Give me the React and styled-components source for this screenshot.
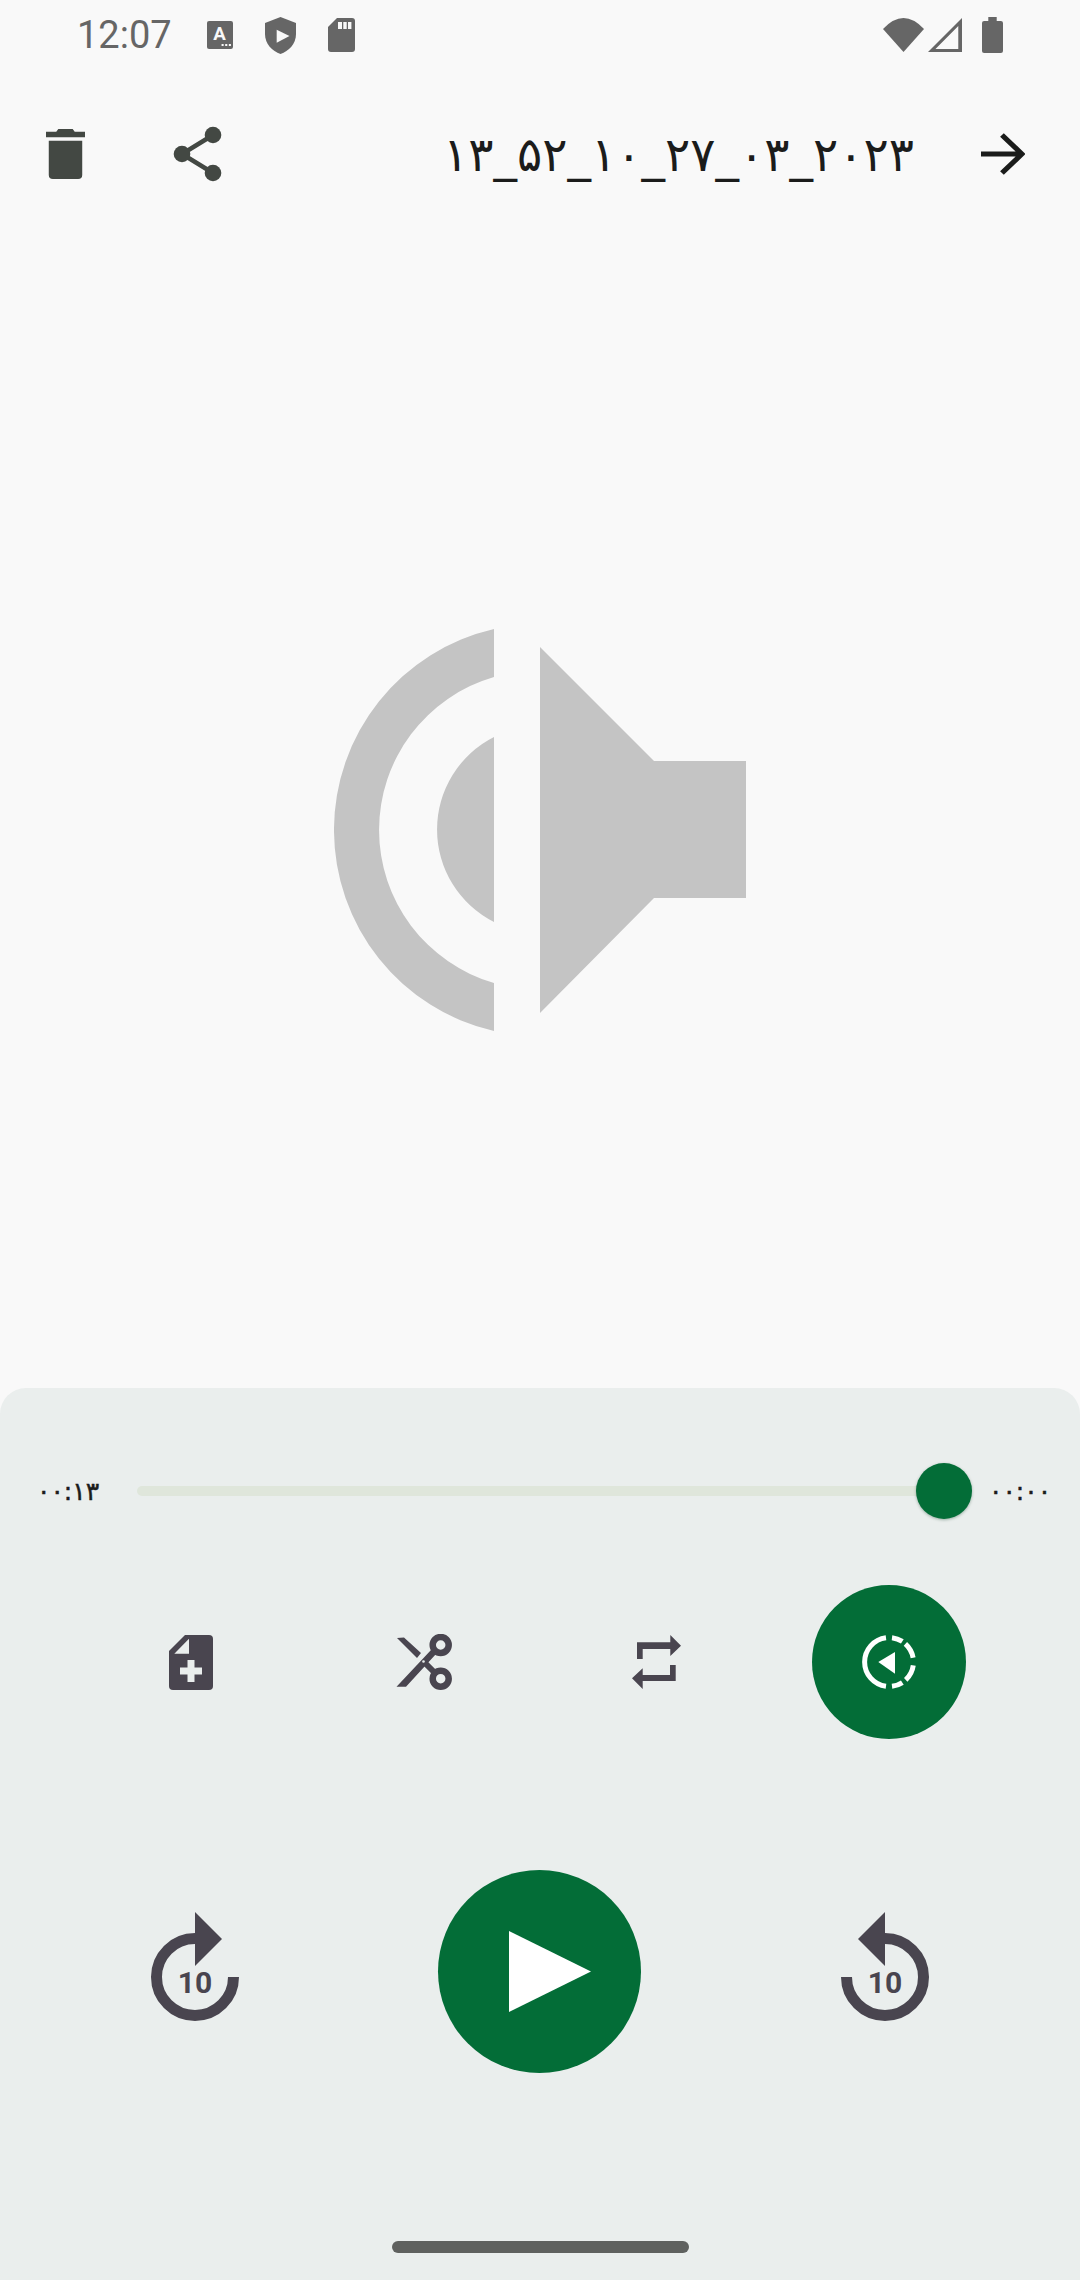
import React from 'react';
import styled, { createGlobalStyle } from 'styled-components';

const GREEN = '#036d37';
const PANEL = '#eaeeed';
const PAGE = '#f9f9f9';
const INK = '#49454f';
const TOP_INK = '#434843';
const STATUS = '#666666';

// right half of the "play from" ring, degrees clockwise from the top
const ringDashes = [[7, 33], [42, 80], [98, 137], [147, 173]];

const polar = deg => {
  const rad = (deg * Math.PI) / 180;
  return `${(30 + 24.5 * Math.sin(rad)).toFixed(2)} ${(30 - 24.5 * Math.cos(rad)).toFixed(2)}`;
};

export default () => (
  <Screen>
    <GlobalStyle />
    <StatusBar>
      <Clock>12:07</Clock>
      <StatusIcons>
        <Icon width="26" height="28" viewBox="0 0 25 28">
          <rect width="25" height="28" rx="2" fill={STATUS} />
          <KeyLetter x="12" y="19">A</KeyLetter>
          <path d="M14 23h2v2h-2zM17.5 23h2v2h-2zM21 23h2v2h-2z" fill={PAGE} />
        </Icon>
        <Icon width="31" height="37" viewBox="0 0 30 37">
          <path d="M15 0 30 6v11c0 10-7 17-15 20C7 34 0 27 0 17V6z" fill={STATUS} />
          <path d="M11.300 12.700 23.700 19l-12.400 6.700z" fill={PAGE} />
        </Icon>
        <Icon width="27" height="34" viewBox="0 0 27 34">
          <path d="M9 0h15a3 3 0 0 1 3 3v28a3 3 0 0 1-3 3H3a3 3 0 0 1-3-3V9z" fill={STATUS} />
          <path d="M10 4h4v7h-4zM15.300 4h3.400v7h-3.400zM20 4h3.400v7H20z" fill={PAGE} />
        </Icon>
      </StatusIcons>
      <Spacer />
      <Icon width="41" height="34" viewBox="0 0 40 34">
        <path d="M0 11Q20-11 40 11L20 34z" fill={STATUS} />
      </Icon>
      <SignalIcon width="34" height="34" viewBox="0 0 32 34">
        <path fillRule="evenodd" d="M32 0v34H0zM28.500 8 7 31h21.500z" fill={STATUS} />
      </SignalIcon>
      <BatteryIcon width="21" height="36" viewBox="0 0 20 36">
        <path d="M6 0h8v4h4a2 2 0 0 1 2 2v28a2 2 0 0 1-2 2H2a2 2 0 0 1-2-2V6a2 2 0 0 1 2-2h4z" fill={STATUS} />
      </BatteryIcon>
    </StatusBar>

    <Toolbar>
      <Icon width="39" height="51" viewBox="0 0 38 51">
        <path d="M0 2.700h10L12 0h14l2 2.700h10v5.600H0zM2.700 11.700h32.600V46a4 4 0 0 1-4 4H6.700a4 4 0 0 1-4-4z" fill={TOP_INK} />
      </Icon>
      <ShareIcon width="50" height="56" viewBox="0 0 50 56">
        <path d="M40 9 9 28l31 19" fill="none" stroke={TOP_INK} strokeWidth="4.500" />
        <circle cx="40" cy="9" r="8.300" fill={TOP_INK} />
        <circle cx="9" cy="28" r="8.300" fill={TOP_INK} />
        <circle cx="40" cy="47" r="8.300" fill={TOP_INK} />
      </ShareIcon>
      <Title dir="rtl">۲۰۲۳_۰۳_۲۷_۱۰_۵۲_۱۳</Title>
      <Icon width="44" height="42" viewBox="0 0 42 42">
        <path d="M0 21h38M20 2l19 19-19 19" fill="none" stroke="#1b1c1b" strokeWidth="5" />
      </Icon>
    </Toolbar>

    <Stage>
      <Icon width="412" height="402" viewBox="334 629 412 402">
        <path
          d="M540 647 654 761h92v137h-92L540 1013zM494 629A206.250 206.250 0 0 0 494 1031V983A159.300 159.300 0 0 1 494 677zM494 737A103.600 103.600 0 0 0 494 922z"
          fill="#c4c4c4"
        />
      </Icon>
    </Stage>

    <Panel>
      <SliderRow>
        <Elapsed>۰۰:۱۳</Elapsed>
        <Track>
          <Thumb />
        </Track>
        <Remaining>۰۰:۰۰</Remaining>
      </SliderRow>

      <ActionRow>
        <ActionSlot>
          <Icon width="44" height="55" viewBox="0 0 44 55">
            <path d="M16 0h24a4 4 0 0 1 4 4v47a4 4 0 0 1-4 4H4a4 4 0 0 1-4-4V16z" fill={INK} />
            <path d="M20 3.700v15H5.300zM18.500 25h7v7.500H33v7h-7.500V47h-7v-7.500H11v-7h7.500z" fill={PANEL} />
          </Icon>
        </ActionSlot>
        <ActionSlot>
          <Icon width="56" height="56" viewBox="0 0 56 56">
            <path d="M.5 52.700H10L40 20l-4.500-4.500zM1 4l7-.5L25 19l-4 5z" fill={INK} />
            <path d="M29 29l9.500 9.500" fill="none" stroke={INK} strokeWidth="6" />
            <circle cx="44.700" cy="11" r="8" fill="none" stroke={INK} strokeWidth="6.500" />
            <circle cx="44.700" cy="44.700" r="8" fill="none" stroke={INK} strokeWidth="6.500" />
            <circle cx="27.500" cy="27.500" r="1.300" fill={PANEL} />
          </Icon>
        </ActionSlot>
        <ActionSlot>
          <Icon width="49" height="54" viewBox="0 0 49 54">
            <path
              d="M5 7.300h33.300V0L49 10.700 38.300 21v-7H10.700v10H5zM43.700 30v16H10.700v8L0 43.300l10.700-10V40H38V30z"
              fill={INK}
            />
          </Icon>
        </ActionSlot>
        <ActionSlot>
          <RoundButton $size={154}>
            <Icon width="60" height="60" viewBox="0 0 60 60">
              <path d="M27 5.700A24.500 24.500 0 0 0 27 54.300" fill="none" stroke="#fff" strokeWidth="5" />
              {ringDashes.map(([from, to]) => (
                <path
                  key={from}
                  d={`M${polar(from)}A24.500 24.500 0 0 1 ${polar(to)}`}
                  fill="none"
                  stroke="#fff"
                  strokeWidth="5"
                />
              ))}
              <path d="M36 20 19.300 30 36 41.700z" fill="#fff" />
            </Icon>
          </RoundButton>
        </ActionSlot>
      </ActionRow>

      <TransportRow>
        <ActionSlot>
          <Icon width="90" height="120" viewBox="0 0 90 120">
            <path d="M45 26.500A38.500 38.500 0 1 0 83.500 65" fill="none" stroke={INK} strokeWidth="11" />
            <path d="M45 0 72 27 45 54z" fill={INK} />
            <SkipLabel x="45" y="81">10</SkipLabel>
          </Icon>
        </ActionSlot>
        <ActionSlot>
          <RoundButton $size={203}>
            <PlayGlyph width="82" height="81" viewBox="0 0 82 81">
              <path d="M0 0 82 40.500 0 81z" fill="#fff" />
            </PlayGlyph>
          </RoundButton>
        </ActionSlot>
        <ActionSlot>
          <Icon width="90" height="120" viewBox="0 0 90 120">
            <path d="M45 26.500A38.500 38.500 0 1 1 6.500 65" fill="none" stroke={INK} strokeWidth="11" />
            <path d="M45 0 18 27 45 54z" fill={INK} />
            <SkipLabel x="45" y="81">10</SkipLabel>
          </Icon>
        </ActionSlot>
      </TransportRow>

      <HomeBar />
    </Panel>
  </Screen>
);

const GlobalStyle = createGlobalStyle`
  html,
  body {
    margin: 0;
    background: ${PAGE};
  }
`;

const Screen = styled.div`
  display: flex;
  flex-direction: column;
  width: 1080px;
  height: 2280px;
  overflow: hidden;
  background: ${PAGE};
  font-family: Roboto, 'Noto Sans', sans-serif;
`;

const Icon = styled.svg.attrs({ preserveAspectRatio: 'none' })`
  display: block;
  flex-shrink: 0;
`;

const StatusBar = styled.div`
  display: flex;
  align-items: center;
  height: 70px;
  padding: 0 77px 0 77px;
`;

const Clock = styled.span`
  width: 130px;
  font-size: 38px;
  font-weight: 400;
  color: ${STATUS};
`;

const StatusIcons = styled.div`
  display: flex;
  align-items: center;
  gap: 32px;
`;

const KeyLetter = styled.text`
  font-family: Roboto, sans-serif;
  font-size: 18px;
  font-weight: 700;
  text-anchor: middle;
  fill: ${PAGE};
`;

const Spacer = styled.div`
  flex: 1;
`;

const SignalIcon = styled(Icon)`
  margin-left: 4px;
`;

const BatteryIcon = styled(Icon)`
  margin-left: 20px;
`;

const Toolbar = styled.div`
  display: flex;
  align-items: center;
  height: 168px;
  padding: 0 55px 0 46px;
`;

const ShareIcon = styled(Icon)`
  margin-left: 88px;
`;

const Title = styled.div`
  flex: 1;
  margin-right: 67px;
  font-family: 'DejaVu Sans', sans-serif;
  font-size: 47px;
  color: #1b1c1b;
  text-align: right;
  white-space: nowrap;
`;

const Stage = styled.main`
  flex: 1;
  display: flex;
  align-items: center;
  justify-content: center;
  padding-top: 34px;
`;

const Panel = styled.section`
  display: flex;
  flex-direction: column;
  height: 892px;
  padding-top: 75px;
  box-sizing: border-box;
  background: ${PANEL};
  border-radius: 26px 26px 0 0;
`;

const SliderRow = styled.div`
  display: flex;
  align-items: center;
  height: 56px;
  padding: 0 41px 0 37px;
`;

const TimeLabel = styled.span`
  font-family: 'DejaVu Sans', sans-serif;
  font-size: 25px;
  color: #1b1c1b;
  -webkit-text-stroke: 0.5px #1b1c1b;
  direction: ltr;
  white-space: nowrap;
`;

const Elapsed = styled(TimeLabel)`
  width: 100px;
`;

const Remaining = styled(TimeLabel)`
  width: 50px;
  margin-left: 17px;
  letter-spacing: -0.5px;
`;

const Track = styled.div`
  position: relative;
  flex: 1;
  height: 10px;
  border-radius: 5px;
  background: #dfe6db;
`;

const Thumb = styled.div`
  position: absolute;
  top: -23px;
  right: 0;
  width: 56px;
  height: 56px;
  border-radius: 50%;
  background: ${GREEN};
  box-shadow: 0 1px 3px rgba(0, 60, 30, 0.35);
`;

const ActionRow = styled.div`
  display: grid;
  grid-template-columns: repeat(4, 232.67px);
  align-items: center;
  height: 154px;
  margin-top: 66px;
  padding-left: 75px;
`;

const ActionSlot = styled.div`
  display: flex;
  align-items: center;
  justify-content: center;
`;

const RoundButton = styled.button`
  display: flex;
  align-items: center;
  justify-content: center;
  width: ${p => p.$size}px;
  height: ${p => p.$size}px;
  padding: 0;
  border: 0;
  border-radius: 50%;
  background: ${GREEN};
`;

const PlayGlyph = styled(Icon)`
  margin-left: 20px;
`;

const TransportRow = styled.div`
  display: grid;
  grid-template-columns: repeat(3, 345px);
  align-items: center;
  margin-top: 131px;
  padding-left: 22px;
`;

const SkipLabel = styled.text`
  font-family: Roboto, sans-serif;
  font-size: 30px;
  font-weight: 700;
  text-anchor: middle;
  fill: ${INK};
`;

const HomeBar = styled.div`
  align-self: center;
  width: 297px;
  height: 12px;
  margin-top: auto;
  margin-bottom: 27px;
  border-radius: 6px;
  background: #5f615f;
`;
